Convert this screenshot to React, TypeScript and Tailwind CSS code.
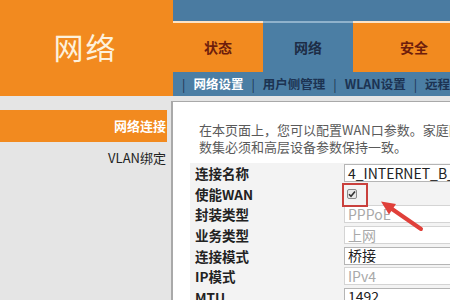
const font = "font-['Noto_Sans_CJK_SC','Noto_Sans',sans-serif]";

const rows = [
  { label: "连接名称", value: "4_INTERNET_B_VID_", kind: "text" },
  { label: "使能WAN", value: "", kind: "check" },
  { label: "封装类型", value: "PPPoE", kind: "disabled" },
  { label: "业务类型", value: "上网", kind: "disabled" },
  { label: "连接模式", value: "桥接", kind: "text" },
  { label: "IP模式", value: "IPv4", kind: "disabled" },
  { label: "MTU", value: "1492", kind: "text" },
];

const subNav = ["网络设置", "用户侧管理", "WLAN设置", "远程管理"];

function Tab({ label, active }: { label: string; active?: boolean }) {
  return (
    <div
      className={
        active
          ? "w-[90px] flex items-center justify-center bg-[#4b7ea4] border-t-2 border-[#8fb2cc] text-[#1d2c45] text-[14px] font-bold"
          : "flex-1 flex items-center justify-center bg-[#f28a1f] border-t-2 border-[#fde3c6] text-[#6e1d0c] text-[14px] font-bold"
      }
    >
      {label}
    </div>
  );
}

export default function App() {
  return (
    <div className={`relative w-[450px] h-[300px] overflow-hidden bg-[#e5e5e5] ${font}`}>
      {/* Header */}
      <div className="flex h-[96px]">
        <div className="w-[173px] shrink-0 bg-[#f28a1f] flex items-center justify-center pb-[3px] pr-[2px]">
          <span className="text-[30px] text-[#fdf1dc] tracking-[2px]">网络</span>
        </div>
        <div className="flex-1 flex flex-col bg-[#4a7ba1]">
          <div className="h-[21px]" />
          <div className="h-[51px] flex">
            <div className="w-[90px] flex">
              <Tab label="状态" />
            </div>
            <Tab label="网络" active />
            <div className="flex-1 flex">
              <Tab label="安全" />
            </div>
          </div>
          <div className="flex-1 flex items-center gap-[8px] pl-[9px] whitespace-nowrap text-[12.5px] font-bold text-[#1c3352] bg-[#4b7ea4]">
            {subNav.map((item, i) => (
              <div key={item} className="flex items-center gap-[8px]">
                <span className="text-[#1c3352] font-normal">|</span>
                <span className={i === 0 ? "text-white" : ""}>{item}</span>
              </div>
            ))}
          </div>
        </div>
      </div>

      <div className="flex">
        {/* Sidebar */}
        <div className="w-[171px] shrink-0 pt-[14px]">
          <div className="w-[167px] h-[32px] bg-[#f28a1f] flex items-center justify-end pr-[1px] text-white text-[13px] font-bold">
            网络连接
          </div>
          <div className="w-[167px] h-[32px] flex items-center justify-end pr-[1px] text-[#222] text-[13px]">
            VLAN绑定
          </div>
        </div>

        {/* Content */}
        <div className="flex-1 mt-[5px] h-[210px] bg-white border-l-2 border-t border-[#a9a9a9] pt-[19px]">
          <div className="pl-[26px] text-[13px] leading-[17px] text-[#5a5a5a] whitespace-nowrap">
            <div>在本页面上，您可以配置WAN口参数。家庭网关</div>
            <div>数集必须和高层设备参数保持一致。</div>
          </div>
          <div className="ml-[17px] mt-[8px] bg-[#f3f3f3]">
            {rows.map((row) => (
              <div key={row.label} className="flex h-[20.6px] items-center">
                <div className="w-[154px] shrink-0 pl-[5px] text-[13.5px] font-bold text-[#222]">{row.label}</div>
                <div className="flex-1 h-full flex items-center">
                  {row.kind === "check" ? (
                    <div className="ml-[3px] w-[10px] h-[10px] border border-[#8a8a8a] bg-[#e8e8e8] rounded-[2px] flex items-center justify-center">
                      <svg width="8" height="8" viewBox="0 0 8 8">
                        <path d="M1 4.2 L3 6.2 L7 1.5" fill="none" stroke="#333" strokeWidth="1.6" />
                      </svg>
                    </div>
                  ) : (
                    <div
                      className={
                        row.kind === "disabled"
                          ? "w-full h-[18px] border border-[#d4d4d4] bg-white pl-[3px] flex items-center text-[14px] text-[#a9a9a9] whitespace-nowrap"
                          : "w-full h-[18px] border border-[#b5b5b5] bg-white pl-[3px] flex items-center text-[14px] text-[#222] whitespace-nowrap"
                      }
                    >
                      {row.value}
                    </div>
                  )}
                </div>
              </div>
            ))}
          </div>
        </div>
      </div>

      {/* Annotation: highlight box and arrow */}
      <div className="absolute left-[342px] top-[183px] w-[26px] h-[24px] border-2 border-[#c9403c]" />
      <svg className="absolute left-0 top-0" width="450" height="300" viewBox="0 0 450 300">
        <line x1="421" y1="229" x2="392" y2="209" stroke="#e0403a" strokeWidth="4" strokeLinecap="round" />
        <polygon points="381,201.5 396,204 389,214.5" fill="#e0403a" />
      </svg>
    </div>
  );
}
